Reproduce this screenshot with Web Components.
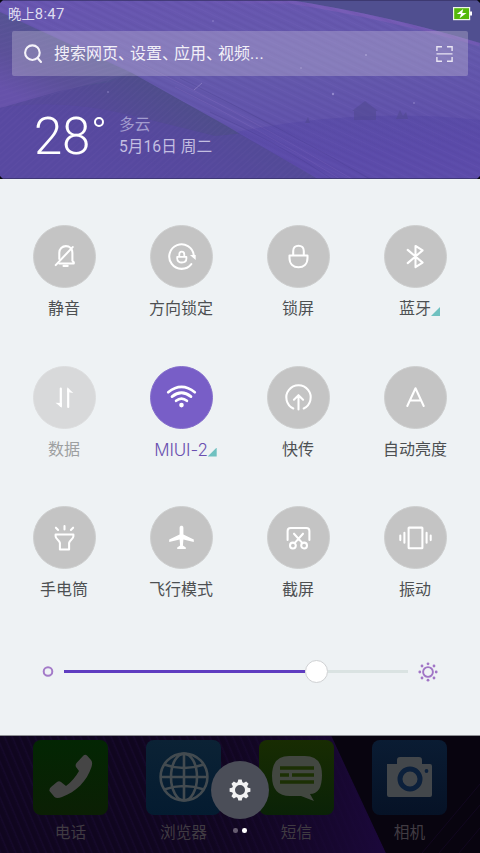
<!DOCTYPE html>
<html lang="zh-CN">
<head>
<meta charset="utf-8">
<title>Control center</title>
<style>
html,body{margin:0;height:853px;overflow:hidden;background:#000}
body{font-family:Roboto,"Noto Sans CJK SC",sans-serif}
</style>
</head>
<body>
<control-center></control-center>
<script>
const define = (name, html, setup) => {
  const t = document.createElement('template');
  t.innerHTML = html;
  customElements.define(name, class extends HTMLElement {
    constructor() {
      super();
      this.attachShadow({mode: 'open'}).append(t.content.cloneNode(true));
    }
    connectedCallback() { if (setup) setup(this, this.shadowRoot); }
  });
};

const icons = {
  mute: '<path d="M-5.300 7H9.300V6L7.900 4.200V-3.800C7.900-7.700 5.100-10.400 1.400-10.400S-5.200-7.700-5.200-3.800V2.500"/><path d="M-8.800 8.600L8.200-9.400"/><path d="M-.9 9.400h4" stroke-width="2.200"/>',
  rotate: '<path d="M9.800 7.600A12.300 12.300 0 1 1 12.300-1.200"/><path d="M8.400-1.600h5.800v5z" fill="#fff" stroke="none"/><path d="M-4.300.3H4.900V2c0 2.600-2 4-4.600 4S-4.300 4.600-4.300 2zM-2.200.3v-2.400C-2.200-3.900-1.100-4.900.3-4.900S2.800-3.900 2.800-2.100V.3" stroke-width="1.800"/>',
  lock: '<path d="M-9-1H9V1.500C9 7.600 5 10.700 0 10.700S-9 7.600-9 1.500zM-5.300-1v-4.600C-5.300-8.800-3.100-10.800 0-10.800S5.300-8.800 5.300-5.600V-1"/>',
  bluetooth: '<path d="M-7.800-6.600L7.100 6.100L0 10.600V-10.600L7.100-6.100L-7.800 6.600"/>',
  data: '<path d="M-3.700-9V8.500M3.700 9.500V-8" stroke-width="2.200"/><path d="M-2.700 10.300v-4.800L-9 5.200zM2.700-10.300v4.800L8.800-4.600z" fill="#fff" stroke="none"/>',
  wifi: '<g stroke-width="2.700"><path d="M-13.300-5.300Q0-15.800 13.300-5.300M-9.500-.9Q0-8.600 9.500-.9M-5.400 3.300Q0-1.200 5.400 3.300"/></g><circle cy="7.600" r="2.300" fill="#fff" stroke="none"/>',
  send: '<path d="M-5.200 11A12.200 12.200 0 1 1 5.200 11M0 12V-1.800M-4.600 2.200L0-2.300L4.600 2.200"/>',
  auto: '<path d="M-8.200 8.500L0-9.200L8.200 8.500M-5.500 3H5.500"/>',
  torch: '<path d="M-8.900-3H8.900V-1.200C8.900 2 5.100 2.400 4.600 5.500V12H-4.600V5.500C-5.100 2.400-8.900 2-8.900-1.200zM0-8v-3.600M-6.400-7.500l-2.200-2.300M6.400-7.500l2.200-2.300"/>',
  plane: '<path d="M-1.900-9.700C-1.900-12.300 1.900-12.300 1.900-9.700V-2.900L12.300 2V4.600L1.900 2.100L1.400 8.100L4.300 10V11.600H-4.300V10L-1.400 8.100L-1.900 2.100L-12.300 4.600V2L-1.900-2.900z" fill="#fff" stroke="none"/>',
  shot: '<path d="M-10.900 2.500V-6.500Q-10.900-9.500-7.900-9.500H7.900Q10.900-9.500 10.900-6.500V2.500M-4.500-3.800L3.700 5.400M4.500-3.800L-3.700 5.400"/><circle cx="-5.600" cy="8" r="2.900"/><circle cx="5.600" cy="8" r="2.900"/>',
  vibrate: '<rect x="-6.900" y="-9.900" width="13.800" height="20.600" rx=".5"/><path d="M-11.100-4.800v10M11.100-4.800v10M-15.200-2v4.600M15.200-2v4.600"/>'
};

define('quick-toggle', `
<style>
:host{display:flex;flex-direction:column;align-items:center;color:#4d5052}
.disc{width:61px;height:61px;border-radius:50%;background:#c4c4c4;border:1px solid #cecfcf}
svg{display:block;width:61px;height:61px;overflow:visible}
.label{display:flex;align-items:flex-end;margin-top:9px;font-size:16px;line-height:24px;white-space:nowrap;height:24px}
i{display:none;width:9px;height:9px;background:#6fc1c0;clip-path:polygon(100% 0,100% 100%,0 100%);margin:0 -9px 5px 0}
:host([more]) i{display:block}
:host([off]) .disc{background:#d8d9da;border-color:#dddedf}
:host([off]){color:#9da0a1}
:host([on]){color:#6a50b0}
:host([on]) .disc{background:#785ec7;border-color:#8670cc}
:host([on]) .label{font-family:Inter,Roboto;font-size:17px;font-weight:300;letter-spacing:-.15px}
</style>
<div class="disc"><svg viewBox="-30.500 -30.500 61 61" fill="none" stroke="#fff" stroke-width="2.050" stroke-linecap="round" stroke-linejoin="round"></svg></div>
<div class="label"><slot></slot><i></i></div>`,
(el, root) => { root.querySelector('svg').innerHTML = icons[el.getAttribute('icon')]; });

define('battery-icon', `
<style>:host{display:block;width:20px;height:14px}svg{display:block}</style>
<svg width="20" height="14"><path d="M17 4.500h2v4h-2z" fill="#fff"/><rect x=".6" y=".6" width="16" height="12" fill="#55b90b" stroke="#eef5e8" stroke-width="1.200"/><path d="M10.200 2L3.800 7H8L6.600 11.200L13.500 6H9.200z" fill="#fff"/></svg>`);

define('status-bar', `
<style>:host{display:flex;justify-content:space-between;align-items:center;height:28px;padding:0 7px 0 8px;box-sizing:border-box;color:#dedcef;font-size:13.400px}
span{line-height:20px} b{font-weight:400;font-size:14.800px;letter-spacing:.3px}</style>
<span>晚上<b>8:47</b></span><battery-icon></battery-icon>`);

define('search-box', `
<style>
:host{display:flex;align-items:center;height:45px;margin:3px 12px 0;padding:0 15px 0 11px;box-sizing:border-box;border-radius:2px;background:rgba(214,208,222,.31);color:#f2f0f8;font-size:16px}
svg{display:block;flex:none}
span{margin-left:10px;flex:1;line-height:24px;white-space:nowrap;padding-top:1px}
i{font-style:normal;letter-spacing:-4px}
b{font-weight:400;letter-spacing:.5px}
</style>
<svg width="21" height="22" fill="none" stroke="#f5f3fa" stroke-width="2.100" stroke-linecap="round"><circle cx="9.400" cy="9.700" r="7.300"/><path d="M14.800 15.300L18 19"/></svg>
<span>搜索网页<i>、</i>设置<i>、</i>应用<i>、</i>视频<b>...</b></span>
<svg width="17" height="18" fill="none" stroke="#e9e5f3" stroke-width="1.400"><path d="M.9 6V1.800H6M11 1.800h5.100V6M.9 12v4.200H6M11 16.200h5.100V12M.5 8.900h16"/></svg>`);

define('weather-summary', `
<style>
:host{display:flex;padding:31px 0 0 34px;color:#fff}
.temp{font-family:Roboto;font-weight:300;font-size:51px;line-height:60px;width:56px;letter-spacing:-.4px}
.deg{box-sizing:border-box;width:10px;height:10px;border:2px solid #fff;border-radius:50%;margin:10px 15px 0 4px}
.info{display:flex;flex-direction:column;font-size:15.700px;line-height:22px;margin-top:7px;white-space:nowrap}
.sky{color:#a29cce}.date{color:#c3bee1}
</style>
<div class="temp">28</div><div class="deg"></div>
<div class="info"><span class="sky">多云</span><span class="date">5月16日 周二</span></div>`);

define('header-scene', `
<style>:host{display:block;width:480px;height:179px}svg{display:block}</style>
<svg width="480" height="179">
<defs>
<linearGradient id="left" gradientUnits="userSpaceOnUse" x1="60" y1="36" x2="28" y2="102"><stop offset="0" stop-color="#545392"/><stop offset=".55" stop-color="#5b5099"/><stop offset="1" stop-color="#6652aa"/></linearGradient>
<linearGradient id="band" x1="0" y1="0" x2=".3" y2="1"><stop offset="0" stop-color="#6855b0"/><stop offset=".5" stop-color="#6459ac"/><stop offset="1" stop-color="#5e4eaa"/></linearGradient>
<linearGradient id="low" gradientUnits="userSpaceOnUse" x1="225" y1="124" x2="170" y2="214"><stop offset="0" stop-color="#4e4d8b"/><stop offset=".5" stop-color="#544997"/><stop offset="1" stop-color="#584a9e"/></linearGradient>
<linearGradient id="edge" x1="0" y1="0" x2="1" y2="0"><stop offset="0" stop-color="#7955b8" stop-opacity="0"/><stop offset=".5" stop-color="#8861bd"/><stop offset="1" stop-color="#7b57b7"/></linearGradient>
<linearGradient id="hill" x1="0" y1="0" x2="0" y2="1"><stop offset="0" stop-color="#4c3fa0" stop-opacity=".32"/><stop offset="1" stop-color="#5642ac" stop-opacity=".2"/></linearGradient>
<pattern id="lines" width="480" height="13" patternUnits="userSpaceOnUse" patternTransform="rotate(25)"><path d="M0 1.500h480M0 8h480" stroke="#806cc4" stroke-opacity=".16" stroke-width="1"/><path d="M0 5h480M0 11h480" stroke="#3d3581" stroke-opacity=".12" stroke-width="1"/></pattern>
<pattern id="rise" width="480" height="9" patternUnits="userSpaceOnUse" patternTransform="rotate(-17)"><path d="M0 2h480M0 6.500h480" stroke="#8571bd" stroke-opacity=".1"/></pattern>
<pattern id="steep" width="480" height="9" patternUnits="userSpaceOnUse" patternTransform="rotate(-42)"><path d="M0 2h480M0 6.500h480" stroke="#8571bd" stroke-opacity=".08"/></pattern>
<clipPath id="bandClip"><path d="M0 0H290Q390 16 480 43V179H318L225 125L132 73L0 12z"/></clipPath>
</defs>
<path fill="#504f90" d="M0 0h480v179H0z"/>
<path fill="url(#low)" d="M0 98L110 82L132 72L225 122L320 179H0z"/>
<path fill="url(#left)" d="M0 12L132 72L110 80L60 91L0 108z"/>
<path fill="url(#rise)" d="M0 12L132 72L110 80L0 108z"/>
<path fill="#5848a3" fill-opacity=".5" d="M0 108Q60 98 130 115T215 136L245 133L318 179H0z"/>
<path fill="url(#steep)" d="M0 107L132 74L318 179H0z"/>
<path fill="url(#band)" d="M0 0H290Q390 16 480 43V179H318L225 125L132 73L0 12z"/>
<path fill="none" stroke="url(#edge)" stroke-width="7" stroke-opacity=".5" clip-path="url(#bandClip)" d="M180 0H290Q390 16 480 43"/>
<path fill="url(#lines)" d="M0 0H290Q390 16 480 43V179H318L225 125L132 73L0 12z"/>
<g clip-path="url(#bandClip)"><path stroke="#8069be" stroke-opacity=".35" fill="none" d="M120 53Q240 112 352 179M175 87Q260 129 340 179"/><path stroke="#40377f" stroke-opacity=".25" fill="none" d="M180 78Q285 130 370 179M210 112Q275 141 332 179"/></g>
<path fill="url(#hill)" d="M236 132Q360 107 480 120V179H318z"/>
<path fill="#51488f" fill-opacity=".55" d="M354 120V111H352L365 101L378 111H376V120zM396 119l4-9 3 6 3-4 2 7zM305 123l3-6 2 6z"/>
<g fill="#a79cda" fill-opacity=".7"><circle cx="333" cy="94" r="1.200"/><circle cx="366" cy="55" r="1"/><circle cx="301" cy="68" r="1.100" opacity=".6"/><circle cx="414" cy="103" r="1.100" opacity=".6"/><circle cx="108" cy="92" r="1.100" opacity=".6"/><circle cx="213" cy="21" r="1" opacity=".6"/></g>
<path d="M194 90L202 83" stroke="#9a8acb" stroke-opacity=".6"/>
<path d="M0 .5h480M0 178.500h480" stroke="#343064" stroke-opacity=".7"/>
<path fill="#08080f" d="M0 0h3L0 3zM480 0v3l-3-3zM0 179v-3l3 3zM480 179v-3l-3 3z"/>
</svg>`);

define('top-header', `
<style>:host{display:grid;height:179px;overflow:hidden}:host>*{grid-area:1/1;min-width:0}header-scene,.content{grid-area:1/1;min-width:0}</style>
<header-scene></header-scene><div class="content"><status-bar></status-bar><search-box></search-box><weather-summary></weather-summary></div>`);

define('brightness-slider', `
<style>
:host{display:flex;align-items:center;height:30px;padding:0 42px}
svg{display:block;flex:none}
.track{display:flex;align-items:center;width:344px;margin:0 10px 0 9px}
.fill{height:3px;width:241px;background:#5f3dc0}
.knob{width:21px;height:21px;border-radius:50%;background:#fff;border:1px solid #cfd1d3;box-sizing:content-box;flex:none}
.rest{height:3px;flex:1;background:#dae3e2}
</style>
<svg width="13" height="13"><circle cx="6" cy="6.500" r="4.300" fill="none" stroke="#a37ac8" stroke-width="2"/></svg>
<div class="track"><div class="fill"></div><div class="knob"></div><div class="rest"></div></div>
<svg width="20" height="20" viewBox="-10 -10 20 20"><circle r="4.900" fill="none" stroke="#a176c6" stroke-width="1.900"/><g fill="#a176c6"><circle cx="-8.200" r="1.400"/><circle cx="8.200" r="1.400"/><circle cy="-8.200" r="1.400"/><circle cy="8.200" r="1.400"/><circle cx="-6" cy="-6" r="1.400"/><circle cx="6" cy="-6" r="1.400"/><circle cx="-6" cy="6" r="1.400"/><circle cx="6" cy="6" r="1.400"/></g></svg>`);

define('toggle-panel', `
<style>
:host{display:flex;flex-direction:column;box-sizing:border-box;height:556px;background:#eef2f4;padding-top:46px}
.grid{display:grid;grid-template-columns:repeat(4,117px);grid-auto-rows:140.500px;padding:0 6.500px 0 5.500px}
brightness-slider{margin-top:10px}
</style>
<div class="grid">
<quick-toggle icon="mute">静音</quick-toggle><quick-toggle icon="rotate">方向锁定</quick-toggle><quick-toggle icon="lock">锁屏</quick-toggle><quick-toggle icon="bluetooth" more>蓝牙</quick-toggle>
<quick-toggle icon="data" off>数据</quick-toggle><quick-toggle icon="wifi" on more>MIUI-2</quick-toggle><quick-toggle icon="send">快传</quick-toggle><quick-toggle icon="auto">自动亮度</quick-toggle>
<quick-toggle icon="torch">手电筒</quick-toggle><quick-toggle icon="plane">飞行模式</quick-toggle><quick-toggle icon="shot">截屏</quick-toggle><quick-toggle icon="vibrate">振动</quick-toggle>
</div>
<brightness-slider></brightness-slider>`);

const apps = {
  phone: ['linear-gradient(#032603,#0b1f04)', '<path fill="#454545" d="M16.500 51Q16 49 18 47L24 42Q26 40.500 28 42L33 46Q41 40 46 31L43 27Q42 25 43.500 23L50 16Q52 14 54 15.500L58 20Q60 22 58.500 27C54 41 43 52 29 57Q24 59 21.500 57z"/>'],
  browser: ['linear-gradient(#0b2235,#041b30)', '<g fill="none" stroke="#434b50" stroke-width="2.600"><circle cx="38" cy="37" r="23.400"/><ellipse cx="38" cy="37" rx="13" ry="23.400"/><path d="M38 13.600v46.800M14.600 37h46.800M18 24.500q20 7 40 0M18 49.500q20-7 40 0"/></g>'],
  sms: ['linear-gradient(#182c02,#0a2207)', '<path fill="#424740" d="M30 16H46Q63 16 63 35T51 54L55 61L42 56H31Q13 56 13 36T30 16z"/><path stroke="#1c3004" stroke-width="3.300" d="M21 28h34M21 35h9M33 35h22M21 42h34"/>'],
  camera: ['linear-gradient(#0a1c33,#061226)', '<path fill="#43474b" d="M15 24H25V20Q25 17 28 17H47Q50 17 50 20V24H58Q60 24 60 26V55Q60 57 58 57H17Q15 57 15 55z"/><circle cx="38" cy="39" r="10" fill="none" stroke="#0c203b" stroke-width="5"/><circle cx="54.500" cy="31" r="1.900" fill="#0c203b"/>']
};
define('app-shortcut', `
<style>
:host{display:flex;flex-direction:column;align-items:center;color:#403b42;font-size:15.700px}
.tile{width:75px;height:75px;border-radius:8px;overflow:hidden}
svg{display:block}
span{line-height:20px;margin-top:8px}
</style>
<div class="tile"><svg width="75" height="75"></svg></div><span><slot></slot></span>`,
(el, root) => {
  const [bg, art] = apps[el.getAttribute('app')];
  root.querySelector('.tile').style.background = bg;
  root.querySelector('svg').innerHTML = art;
});

define('settings-button', `
<style>:host{display:block;width:58px;height:58px;border-radius:50%;background:#4b4e58}svg{display:block}</style>
<svg width="58" height="58" viewBox="-29 -29 58 58"></svg>`,
(el, root) => {
  let teeth = '';
  for (let a = 0; a < 360; a += 45) teeth += '<path d="M-2.600-7L-1.700-10.400H1.700L2.600-7z" transform="rotate(' + a + ')"/>';
  root.querySelector('svg').innerHTML = '<g fill="#f3f3f4">' + teeth + '</g><circle r="6.500" fill="none" stroke="#f3f3f4" stroke-width="3"/>';
});

define('home-dock', `
<style>
:host{display:block;position:relative;height:118px;overflow:hidden;background:repeating-linear-gradient(67deg,#150929 0 1px,#10061f 2px 5px,#120725 7px)}
.beam{display:block;position:absolute;inset:0}
.apps{display:grid;position:relative;grid-template-columns:repeat(4,113px);padding:5px 14px}
settings-button{position:absolute;left:211px;top:26px}
.dots{position:absolute;left:233px;top:93px;display:flex;gap:4.500px}
.dots i{width:4.600px;height:4.600px;border-radius:50%;background:#fff}
.dots i:first-child{background:#665c70}
.top{position:absolute;inset:0 0 auto;height:1px;background:#8e9094}
</style>
<svg class="beam" width="480" height="118"><defs><linearGradient id="g"><stop offset="0" stop-color="#150627" stop-opacity="0"/><stop offset="1" stop-color="#1b083b"/></linearGradient></defs><path fill="url(#g)" d="M200 0H331L386 118H200z"/><path fill="#08040f" d="M331 0H480V118H386z"/><path fill="none" stroke="#120820" d="M422 118L480 49M439 118L480 70M459 118L480 93"/></svg>
<div class="apps"><app-shortcut app="phone">电话</app-shortcut><app-shortcut app="browser">浏览器</app-shortcut><app-shortcut app="sms">短信</app-shortcut><app-shortcut app="camera">相机</app-shortcut></div>
<div class="top"></div>
<settings-button></settings-button><div class="dots"><i></i><i></i></div>`);

define('control-center', `
<style>:host{display:flex;flex-direction:column;width:480px;height:853px;overflow:hidden}</style>
<top-header></top-header><toggle-panel></toggle-panel><home-dock></home-dock>`);
</script>
</body>
</html>
